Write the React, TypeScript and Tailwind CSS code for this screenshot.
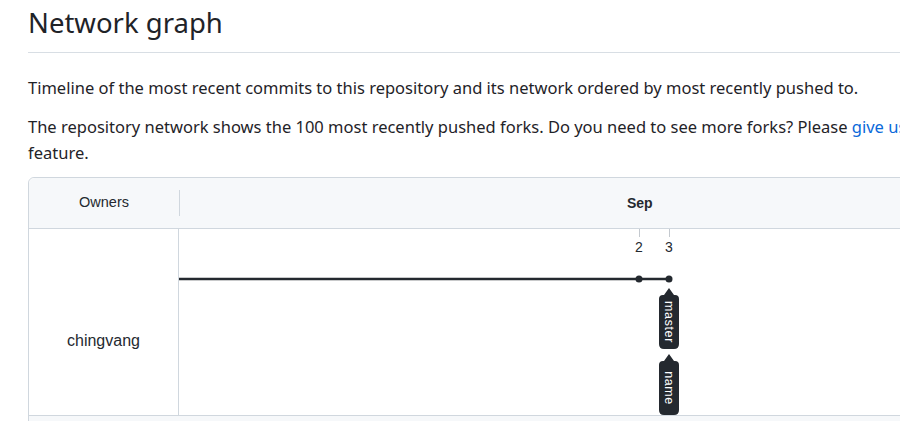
import React from 'react';

const sans = { fontFamily: '"Noto Sans", "Open Sans", sans-serif' };
const arial = { fontFamily: '"Liberation Sans", Arial, sans-serif' };

const Graph: React.FC = () => (
  <svg width="840" height="186" viewBox="0 0 840 186" className="block">
    {/* day ticks */}
    <line x1="460.5" y1="0" x2="460.5" y2="8" stroke="#c4c9cf" strokeWidth="1" />
    <line x1="490.5" y1="0" x2="490.5" y2="8" stroke="#c4c9cf" strokeWidth="1" />
    <text x="460" y="23" textAnchor="middle" fontSize="14" fill="#24292f" style={arial}>2</text>
    <text x="490" y="23" textAnchor="middle" fontSize="14" fill="#24292f" style={arial}>3</text>

    {/* branch line */}
    <line x1="0" y1="50" x2="490" y2="50" stroke="#24292f" strokeWidth="2.5" />
    <circle cx="460" cy="50" r="3.5" fill="#24292f" />
    <circle cx="490" cy="50" r="3.5" fill="#24292f" />

    {/* master label */}
    <path d="M490 59 L495 66 L496 66 Q500 66 500 70 L500 115 Q500 120 495 120 L485 120 Q480 120 480 115 L480 70 Q480 66 484 66 L485 66 Z" fill="#24292f" />
    <text x="0" y="0" transform="translate(486 93) rotate(90)" textAnchor="middle" fontSize="12.5" fill="#ffffff" style={arial} letterSpacing="0.6">master</text>

    {/* name label */}
    <path d="M490 125 L495 132 L496 132 Q500 132 500 136 L500 181 Q500 186 495 186 L485 186 Q480 186 480 181 L480 136 Q480 132 484 132 L485 132 Z" fill="#24292f" />
    <text x="0" y="0" transform="translate(486 159) rotate(90)" textAnchor="middle" fontSize="12.5" fill="#ffffff" style={arial} letterSpacing="0.6">name</text>
  </svg>
);

export default function App() {
  return (
    <div className="w-[900px] h-[421px] overflow-hidden bg-white text-[#1f2328]">
      <div className="w-[1200px] pl-7">
        <div className="w-[1100px]">
          <h1 className="text-[27.5px] leading-[44px] pt-px pb-[7px] border-b border-[#d8dee4]" style={sans}>
            Network graph
          </h1>
          <p className="mt-[23px] text-[16.5px] leading-6" style={sans}>
            Timeline of the most recent commits to this repository and its network ordered by most recently pushed to.
          </p>
          <p className="mt-[14px] w-[1060px] text-[16.5px] leading-[26px]" style={sans}>
            The repository network shows the 100 most recently pushed forks. Do you need to see more forks? Please{' '}
            <a className="text-[#0969da]">give us feedback</a> about this feature.
          </p>

          <div className="mt-[11px] border border-[#d0d7de] rounded-tl-md rounded-tr-md" style={arial}>
            <div className="flex h-[51px] bg-[#f6f8fa] border-b border-[#d0d7de] rounded-t-md">
              <div className="w-[150px] flex items-center justify-center text-[14.5px] text-[#24292f]">Owners</div>
              <div className="flex items-center">
                <div className="w-px h-[26px] bg-[#d0d7de]" />
              </div>
              <div className="flex-1 relative flex items-center">
                <span className="ml-[447px] text-[14px] font-bold text-[#24292f]">Sep</span>
              </div>
            </div>
            <div className="flex h-[187px] border-b border-[#d0d7de]">
              <div className="w-[150px] pt-[100px] flex justify-center text-[16px] text-[#24292f] border-r border-[#d0d7de]">
                chingvang
              </div>
              <div className="flex-1">
                <Graph />
              </div>
            </div>
            <div className="h-10 bg-[#f6f8fa]" />
          </div>
        </div>
      </div>
    </div>
  );
}
